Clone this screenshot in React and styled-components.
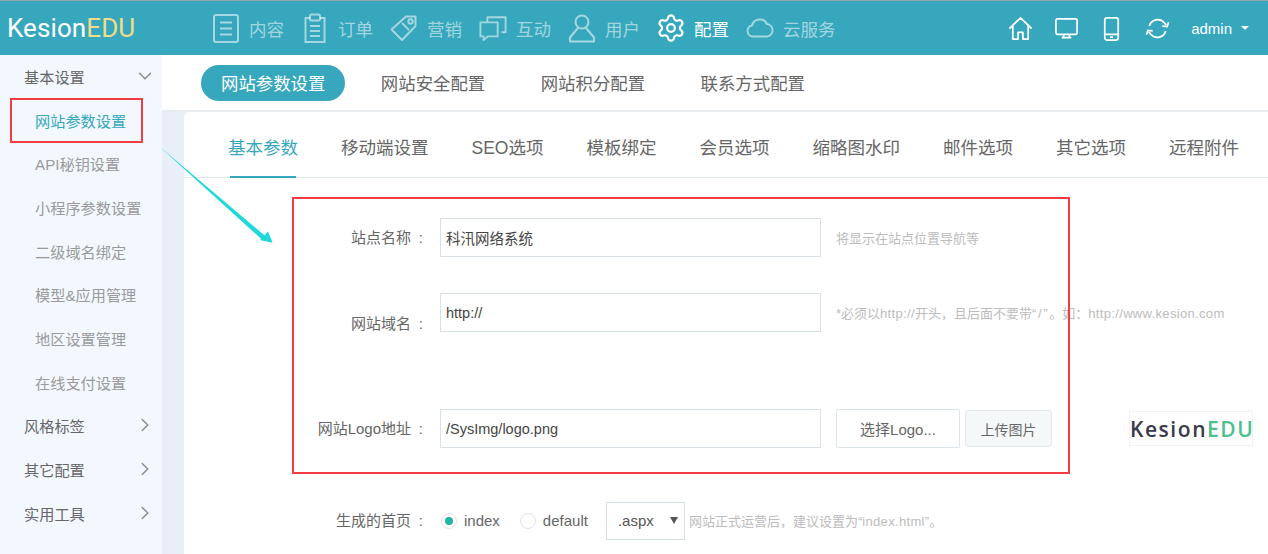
import React from "react";
import styled, { createGlobalStyle } from "styled-components";
import { ChevronDown, ChevronRight, Settings } from "lucide-react";

const GlobalStyle = createGlobalStyle`
  html, body {
    margin: 0;
    padding: 0;
    background: #fff;
    overflow: hidden;
  }
  * {
    box-sizing: border-box;
  }
`;

const Page = styled.div`
  position: relative;
  width: 1268px;
  height: 554px;
  overflow: hidden;
  display: flex;
  flex-direction: column;
  font-family: "Liberation Sans", "Noto Sans CJK SC", sans-serif;
  color: #666;
`;

const TopBar = styled.header`
  height: 55px;
  flex: none;
  display: flex;
  align-items: center;
  background: #36a7bc;
  border-top: 1px solid #8fa6ad;
  color: #fff;
`;

const Logo = styled.div`
  width: 212px;
  padding-left: 7px;
  font-family: Roboto, "Liberation Sans", sans-serif;
  font-size: 26px;
  letter-spacing: 0.1px;
  span {
    color: #f0dc8c;
  }
`;

const Nav = styled.nav`
  display: flex;
  flex: 1;
`;

const NavItem = styled.div`
  width: 89px;
  display: flex;
  align-items: center;
  gap: 9px;
  font-size: 17.5px;
  white-space: nowrap;
  color: ${({ $active }) => ($active ? "#fff" : "rgba(255,255,255,.55)")};
  svg {
    flex: none;
    width: 28px;
    height: 30px;
  }
`;

const TopTools = styled.div`
  display: flex;
  align-items: center;
  padding-right: 19px;
  color: #fff;
`;

const ToolIcon = styled.span`
  width: 45.5px;
  display: flex;
  justify-content: center;
  svg {
    width: 25px;
    height: 25px;
  }
`;

const Admin = styled.span`
  margin-left: 11px;
  font-size: 15px;
  display: flex;
  align-items: center;
  gap: 9px;
  &::after {
    content: "";
    border: 4px solid transparent;
    border-top: 4px solid #fff;
    border-bottom: 0;
  }
`;

const Body = styled.div`
  flex: 1;
  display: flex;
  min-height: 0;
`;

const Sidebar = styled.aside`
  width: 162px;
  flex: none;
  background: #f3f8ff;
`;

const MenuRow = styled.div`
  height: 43.7px;
  display: flex;
  align-items: center;
  justify-content: space-between;
  padding: 0 6px 2px ${({ $sub }) => ($sub ? "35px" : "24px")};
  font-size: 15.2px;
  color: ${({ $sub, $active }) =>
    $active ? "#36a7bc" : $sub ? "#9a9a9a" : "#666"};
  svg {
    width: 22px;
    height: 22px;
    color: #8a8f94;
  }
`;

const Main = styled.main`
  flex: 1;
  min-width: 0;
  display: flex;
  flex-direction: column;
`;

const PillBar = styled.div`
  height: 57px;
  flex: none;
  display: flex;
  align-items: flex-start;
  gap: 15.5px;
  padding: 10px 0 0 39px;
  border-bottom: 2px solid #e8ecef;
`;

const Pill = styled.div`
  height: 36px;
  padding: 0 20px 2px;
  display: flex;
  align-items: center;
  border-radius: 18px;
  font-size: 17.4px;
  color: ${({ $active }) => ($active ? "#fff" : "#666")};
  background: ${({ $active }) => ($active ? "#36a7bc" : "transparent")};
`;

const Content = styled.div`
  flex: 1;
  min-height: 0;
  padding-left: 22px;
  background: #e9eff8;
`;

const Card = styled.section`
  height: 100%;
  background: #fff;
  border-top-left-radius: 6px;
`;

const Tabs = styled.div`
  height: 66px;
  display: flex;
  gap: 43px;
  padding-left: 44px;
  border-bottom: 1px solid #dfe6ea;
`;

const Tab = styled.div`
  position: relative;
  padding-top: 24px;
  font-size: 17.5px;
  line-height: 24px;
  color: ${({ $active }) => ($active ? "#36a7bc" : "#666")};
  ${({ $active }) =>
    $active &&
    `&::after {
      content: "";
      position: absolute;
      left: 2px;
      right: 2px;
      bottom: -1px;
      height: 2px;
      background: #36a7bc;
    }`}
`;

const FormRow = styled.div`
  display: flex;
  align-items: center;
  height: 39px;
  margin-top: ${({ $top }) => $top}px;
`;

const Label = styled.label`
  width: 242px;
  flex: none;
  text-align: right;
  font-size: 15px;
  color: #666;
  padding-top: ${({ $drop }) => $drop || 0}px;
  padding-bottom: 2px;
`;

const Colon = styled.span`
  display: inline-block;
  width: 15px;
  padding-right: 3px;
  text-align: right;
`;

const TextInput = styled.input`
  width: 381px;
  height: 39px;
  margin-left: 14px;
  padding: 0 5px;
  border: 1px solid #d8e2e6;
  outline: 0;
  background: #fff;
  font: 14.5px "Liberation Sans", "Noto Sans CJK SC", sans-serif;
  color: #444;
`;

const Hint = styled.span`
  margin-left: ${({ $left }) => $left ?? 15}px;
  font-size: 13px;
  color: #bcbcbc;
  white-space: nowrap;
`;

const Latin = styled.span`
  letter-spacing: 0.33px;
`;

const Quoted = styled.span`
  letter-spacing: 1.7px;
`;

const LogoButton = styled.button`
  width: 124px;
  height: 39px;
  margin-left: 15px;
  border: 1px solid #dbe4e8;
  border-radius: 2px;
  background: #fff;
  font: 15px "Liberation Sans", "Noto Sans CJK SC", sans-serif;
  color: #666;
`;

const UploadButton = styled.button`
  width: 87px;
  height: 37px;
  margin-left: 5px;
  border: 1px solid #e4eaec;
  border-radius: 3px;
  background: #f5f8f9;
  font: 14px "Liberation Sans", "Noto Sans CJK SC", sans-serif;
  color: #666;
`;

const Preview = styled.div`
  width: 124px;
  height: 35px;
  margin-left: 77px;
  display: flex;
  align-items: center;
  border: 1px solid #f2f2f2;
  font-family: "Open Sans", sans-serif;
  font-size: 21px;
  font-weight: 600;
  letter-spacing: 1.55px;
  white-space: nowrap;
  color: #3a3a4a;
  span {
    color: #4cc08c;
  }
`;

const Radio = styled.span`
  width: 16px;
  height: 16px;
  margin-left: ${({ $left }) => $left}px;
  flex: none;
  display: flex;
  align-items: center;
  justify-content: center;
  border: 1px solid #dde4e6;
  border-radius: 50%;
  &::after {
    content: "";
    width: 8px;
    height: 8px;
    border-radius: 50%;
    background: ${({ $on }) => ($on ? "#1fb5a0" : "transparent")};
  }
`;

const RadioText = styled.span`
  margin-left: 7px;
  font-size: 15px;
  color: #666;
`;

const SuffixWrap = styled.div`
  position: relative;
  width: 79px;
  height: 38px;
  margin-left: 18px;
  &::after {
    content: "";
    position: absolute;
    right: 7px;
    top: 15px;
    border: 4px solid transparent;
    border-top: 7px solid #555;
    border-bottom: 0;
  }
`;

const Suffix = styled.select`
  appearance: none;
  width: 100%;
  height: 100%;
  padding-left: 11px;
  border: 1px solid #d8e2e6;
  border-radius: 0;
  background: #fff;
  font: 15px "Liberation Sans", sans-serif;
  color: #555;
`;

const RedBox = styled.div`
  position: absolute;
  left: ${({ $x }) => $x}px;
  top: ${({ $y }) => $y}px;
  width: ${({ $w }) => $w}px;
  height: ${({ $h }) => $h}px;
  border: 2px solid #f23c3f;
  pointer-events: none;
`;

const Arrow = styled.svg`
  position: absolute;
  left: 150px;
  top: 135px;
`;

const ContentIcon = () => (
  <svg viewBox="0 0 28 30" fill="none" stroke="currentColor" strokeWidth="2">
    <rect x="2" y="2" width="24" height="27" rx="2" />
    <path d="M8 9.5h12M8 15.5h12M8 21.5h12" />
  </svg>
);

const OrderIcon = () => (
  <svg viewBox="0 0 28 30" fill="none" stroke="currentColor" strokeWidth="2">
    <path d="M9 5H4.5v24h19V5H19" />
    <rect x="9" y="1.5" width="10" height="6" rx="1.5" />
    <path d="M9 13h10M9 18h10M9 23h10" />
  </svg>
);

const TagIcon = () => (
  <svg viewBox="0 0 28 30" fill="none" stroke="currentColor" strokeWidth="2">
    <path d="M16 3.5h9.5V13L12 27 1.5 16.5z" strokeLinejoin="round" />
    <circle cx="20.5" cy="8.5" r="2.2" />
    <path d="M12 10l7 7" />
  </svg>
);

const ChatIcon = () => (
  <svg viewBox="0 0 30 30" fill="none" stroke="currentColor" strokeWidth="2">
    <path d="M9 9V3.5h19.5v16H24M20 9H1.5v15H5v4l4.5-4H20V9z" strokeLinejoin="round" />
  </svg>
);

const UserIcon = () => (
  <svg viewBox="0 0 28 30" fill="none" stroke="currentColor" strokeWidth="2">
    <circle cx="14" cy="9" r="6.5" />
    <path d="M10 15L2 24.5V28.5h24v-4L18 15" strokeLinejoin="round" />
  </svg>
);

const CloudIcon = () => (
  <svg viewBox="0 0 28 30" fill="none" stroke="currentColor" strokeWidth="2">
    <path d="M7 23.5a5.5 5.5 0 0 1-1-10.9A8 8 0 0 1 21 11a6.3 6.3 0 0 1 0 12.5z" strokeLinejoin="round" />
  </svg>
);

const HomeIcon = () => (
  <svg viewBox="0 0 26 26" fill="none" stroke="currentColor" strokeWidth="1.8">
    <path d="M1.5 13L13 2l11.5 11M5 10.5V24h5.5v-7h5v7H21V10.5" strokeLinejoin="round" />
  </svg>
);

const MonitorIcon = () => (
  <svg viewBox="0 0 26 26" fill="none" stroke="currentColor" strokeWidth="1.8">
    <rect x="2" y="3" width="22" height="16" rx="1.5" />
    <path d="M8 22.5h10M10 19v3.5M16 19v3.5" />
  </svg>
);

const PhoneIcon = () => (
  <svg viewBox="0 0 26 26" fill="none" stroke="currentColor" strokeWidth="1.8">
    <rect x="6" y="2" width="14" height="23" rx="2" />
    <path d="M6 19h14M11.5 22h3" />
  </svg>
);

const RefreshIcon = () => (
  <svg viewBox="0 0 26 26" fill="none" stroke="currentColor" strokeWidth="1.8">
    <path d="M4.5 10.5A9 9 0 0 1 20 7l2 2.5M21.5 15.5A9 9 0 0 1 6 19l-2-2.5" />
    <path d="M24.5 6.5l-1.5 4.5-5-.5M1.5 19.5l1.5-4.5 5 .5" />
  </svg>
);

const navItems = [
  { label: "内容", icon: <ContentIcon /> },
  { label: "订单", icon: <OrderIcon /> },
  { label: "营销", icon: <TagIcon /> },
  { label: "互动", icon: <ChatIcon /> },
  { label: "用户", icon: <UserIcon /> },
  { label: "配置", icon: <Settings strokeWidth={1.7} viewBox="1 1 22 22" />, active: true },
  { label: "云服务", icon: <CloudIcon /> },
];

const subMenu = [
  "API秘钥设置",
  "小程序参数设置",
  "二级域名绑定",
  "模型&应用管理",
  "地区设置管理",
  "在线支付设置",
];

const tabs = [
  "基本参数",
  "移动端设置",
  "SEO选项",
  "模板绑定",
  "会员选项",
  "缩略图水印",
  "邮件选项",
  "其它选项",
  "远程附件",
];

const App = () => (
  <Page>
    <GlobalStyle />
    <TopBar>
      <Logo>
        Kesion<span>EDU</span>
      </Logo>
      <Nav>
        {navItems.map((item) => (
          <NavItem key={item.label} $active={item.active}>
            {item.icon}
            {item.label}
          </NavItem>
        ))}
      </Nav>
      <TopTools>
        <ToolIcon><HomeIcon /></ToolIcon>
        <ToolIcon><MonitorIcon /></ToolIcon>
        <ToolIcon><PhoneIcon /></ToolIcon>
        <ToolIcon><RefreshIcon /></ToolIcon>
        <Admin>admin</Admin>
      </TopTools>
    </TopBar>

    <Body>
      <Sidebar>
        <MenuRow>
          基本设置
          <ChevronDown strokeWidth={1.7} />
        </MenuRow>
        <MenuRow $sub $active>网站参数设置</MenuRow>
        {subMenu.map((name) => (
          <MenuRow $sub key={name}>{name}</MenuRow>
        ))}
        {["风格标签", "其它配置", "实用工具"].map((name) => (
          <MenuRow key={name}>
            {name}
            <ChevronRight strokeWidth={1.7} />
          </MenuRow>
        ))}
      </Sidebar>

      <Main>
        <PillBar>
          <Pill $active>网站参数设置</Pill>
          <Pill>网站安全配置</Pill>
          <Pill>网站积分配置</Pill>
          <Pill>联系方式配置</Pill>
        </PillBar>
        <Content>
          <Card>
            <Tabs>
              {tabs.map((tab, index) => (
                <Tab key={tab} $active={index === 0}>{tab}</Tab>
              ))}
            </Tabs>

            <FormRow $top={40}>
              <Label>站点名称<Colon>:</Colon></Label>
              <TextInput defaultValue="科汛网络系统" />
              <Hint>将显示在站点位置导航等</Hint>
            </FormRow>

            <FormRow $top={36}>
              <Label $drop={22}>网站域名<Colon>:</Colon></Label>
              <TextInput defaultValue="http://" />
              <Hint>
                *必须以<Latin>http://</Latin>开头，且后面不要带<Quoted>“/”</Quoted>。如：<Latin>http://www.kesion.com</Latin>
              </Hint>
            </FormRow>

            <FormRow $top={77}>
              <Label>网站Logo地址<Colon>:</Colon></Label>
              <TextInput defaultValue="/SysImg/logo.png" />
              <LogoButton>选择Logo...</LogoButton>
              <UploadButton>上传图片</UploadButton>
              <Preview>
                Kesion<span>EDU</span>
              </Preview>
            </FormRow>

            <FormRow $top={53}>
              <Label>生成的首页<Colon>:</Colon></Label>
              <Radio $left={15} $on />
              <RadioText>index</RadioText>
              <Radio $left={20} />
              <RadioText>default</RadioText>
              <SuffixWrap>
                <Suffix defaultValue=".aspx">
                  <option>.aspx</option>
                  <option>.html</option>
                </Suffix>
              </SuffixWrap>
              <Hint $left={4}>网站正式运营后，建议设置为“<Latin>index.html</Latin>”。</Hint>
            </FormRow>
          </Card>
        </Content>
      </Main>
    </Body>

    <RedBox $x={10} $y={98} $w={133} $h={45} />
    <RedBox $x={292} $y={197} $w={778} $h={277} />
    <Arrow width="130" height="115" viewBox="0 0 130 115">
      <path d="M10 12 L116.5 102 L113.5 106 Z" fill="#1fd8d8" />
      <path d="M122.7 107.7 L110 105 L118 96.5 Z" fill="#1fd8d8" />
    </Arrow>
  </Page>
);

export default App;
